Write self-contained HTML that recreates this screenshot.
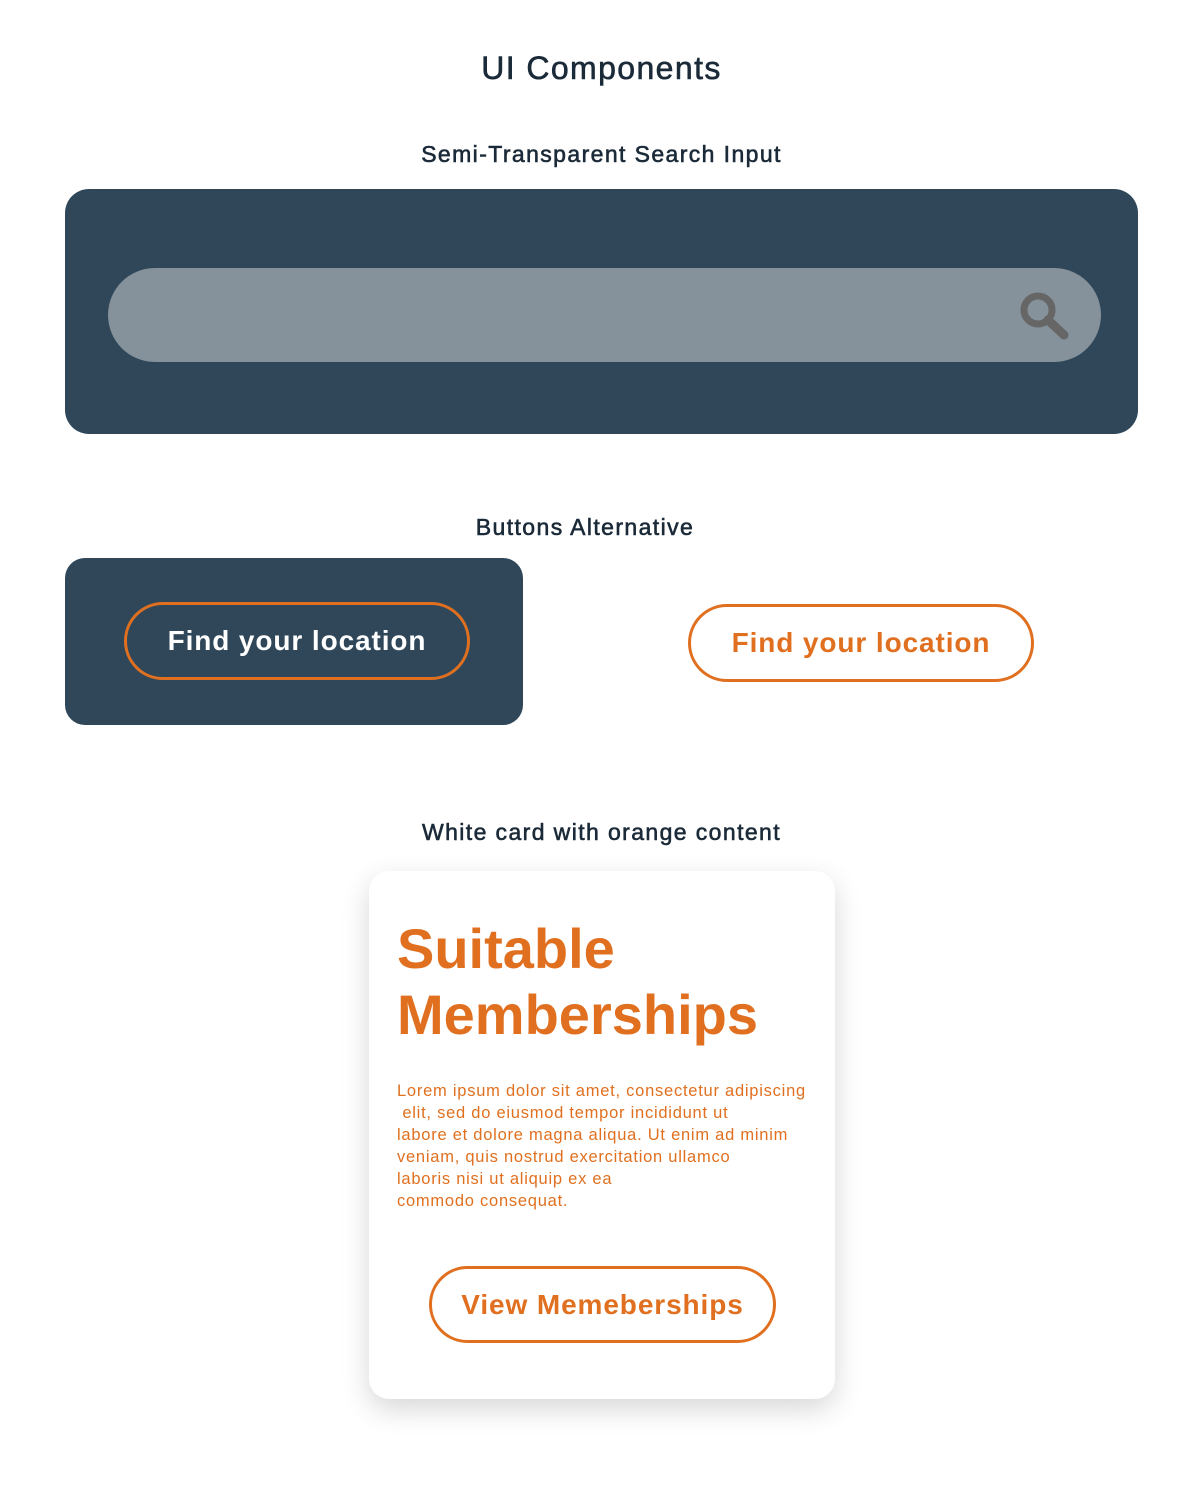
<!DOCTYPE html>
<html><head><meta charset="utf-8"><style>
*{margin:0;padding:0;box-sizing:border-box}
body{width:1203px;height:1493px;background:#fff;position:relative;font-family:"Liberation Sans",sans-serif;overflow:hidden}
.a{position:absolute}
.h{color:#1b2a38;-webkit-text-stroke:0.6px #1b2a38;text-align:center;white-space:nowrap;letter-spacing:1.4px}
.btn{position:absolute;border:3px solid #e07020;border-radius:40px;font-weight:700;font-size:28px;letter-spacing:0.9px;display:flex;align-items:center;justify-content:center;white-space:nowrap}
</style></head><body>
<div class="a h" style="left:0;width:1203px;top:48px;font-size:32px;line-height:40px">UI Components</div>
<div class="a h" style="left:0;width:1203px;top:140px;font-size:23px;line-height:28px">Semi-Transparent Search Input</div>
<div class="a" style="left:65px;top:189px;width:1073px;height:245px;background:#2f4759;border-radius:24px"></div>
<div class="a" style="left:108px;top:268px;width:993px;height:94px;background:#85929b;border-radius:47px"></div>
<svg class="a" style="left:1010px;top:285px" width="70" height="65" viewBox="0 0 70 65"><circle cx="28" cy="25" r="14" fill="none" stroke="#666" stroke-width="7"/><line x1="38" y1="35" x2="54" y2="50" stroke="#666" stroke-width="9" stroke-linecap="round"/></svg>
<div class="a h" style="left:0;width:1170px;top:513px;font-size:23px;line-height:28px">Buttons Alternative</div>
<div class="a" style="left:65px;top:558px;width:458px;height:167px;background:#2f4759;border-radius:20px"></div>
<div class="btn" style="left:124px;top:602px;width:346px;height:78px;color:#fff">Find your location</div>
<div class="btn" style="left:688px;top:604px;width:346px;height:78px;color:#e07020">Find your location</div>
<div class="a h" style="left:0;width:1203px;top:818px;font-size:23px;line-height:28px">White card with orange content</div>
<div class="a" style="left:369px;top:871px;width:466px;height:528px;background:#fff;border-radius:20px;box-shadow:0 10px 28px rgba(0,0,0,0.16)"></div>
<div class="a" style="left:397px;top:916px;font-size:56px;font-weight:700;line-height:66px;color:#e07020;white-space:nowrap">Suitable<br>Memberships</div>
<div class="a" style="left:397px;top:1080px;font-size:16.5px;line-height:22px;color:#e07020;white-space:nowrap;letter-spacing:0.75px">Lorem ipsum dolor sit amet, consectetur adipiscing<br>&nbsp;elit, sed do eiusmod tempor incididunt ut<br>labore et dolore magna aliqua. Ut enim ad minim<br>veniam, quis nostrud exercitation ullamco<br>laboris nisi ut aliquip ex ea<br>commodo consequat.</div>
<div class="btn" style="left:429px;top:1266px;width:347px;height:77px;color:#e07020">View Memeberships</div>
</body></html>
